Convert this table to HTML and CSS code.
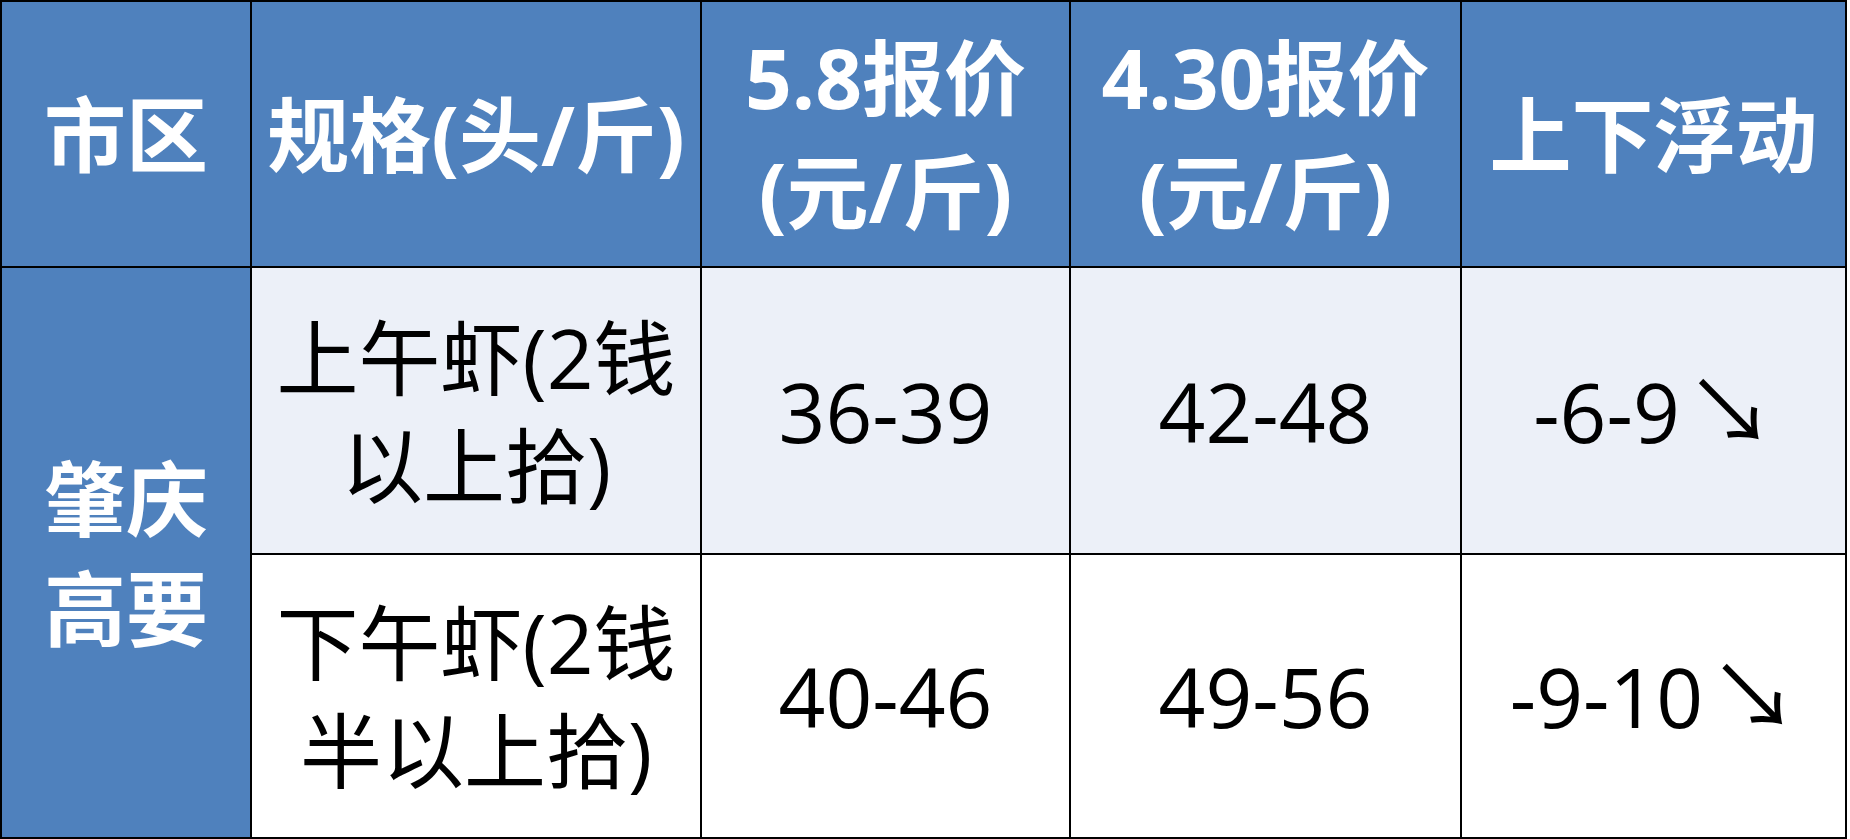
FILE: index.html
```html
<!DOCTYPE html>
<html lang="zh-CN">
<head>
<meta charset="utf-8">
<title>报价表</title>
<link rel="stylesheet" href="styles.css">
</head>
<body>
<div class="sheet">
  <div class="cell head">市区</div>
  <div class="cell head">规格(头/斤)</div>
  <div class="cell head">5.8报价<br>(元/斤)</div>
  <div class="cell head">4.30报价<br>(元/斤)</div>
  <div class="cell head">上下浮动</div>

  <div class="cell region">肇庆<br>高要</div>
  <div class="cell body tint">上午虾(2钱<br>以上拾)</div>
  <div class="cell body tint">36-39</div>
  <div class="cell body tint">42-48</div>
  <div class="cell body tint"><span>-6-9<span class="arrow">↘</span></span></div>

  <div class="cell body">下午虾(2钱<br>半以上拾)</div>
  <div class="cell body">40-46</div>
  <div class="cell body">49-56</div>
  <div class="cell body"><span>-9-10<span class="arrow">↘</span></span></div>
</div>
</body>
</html>
```
FILE: styles.css
```css
html, body {
  margin: 0;
  padding: 0;
  background: #ffffff;
}

.sheet {
  display: grid;
  grid-template-columns: 248px 448px 367px 389px 383px;
  grid-template-rows: 264px 285px 282px;
  gap: 2px;
  padding: 2px;
  width: max-content;
  background: #000000;
  font-family: "Open Sans", "Noto Sans CJK SC", sans-serif;
}

.cell {
  display: flex;
  align-items: center;
  justify-content: center;
  text-align: center;
  font-size: 82px;
  color: #000000;
  background: #ffffff;
}

.head {
  background: #4f81bd;
  color: #ffffff;
  font-weight: 700;
  line-height: 114px;
}

.region {
  grid-row: span 2;
  background: #4f81bd;
  color: #ffffff;
  font-weight: 700;
  line-height: 110px;
}

.body {
  line-height: 108px;
}

.tint {
  background: #ecf0f8;
}

.arrow {
  font-family: "Noto Sans CJK SC", sans-serif;
  font-size: 88px;
  line-height: 1;
  margin-left: 6px;
  vertical-align: baseline;
}
```
